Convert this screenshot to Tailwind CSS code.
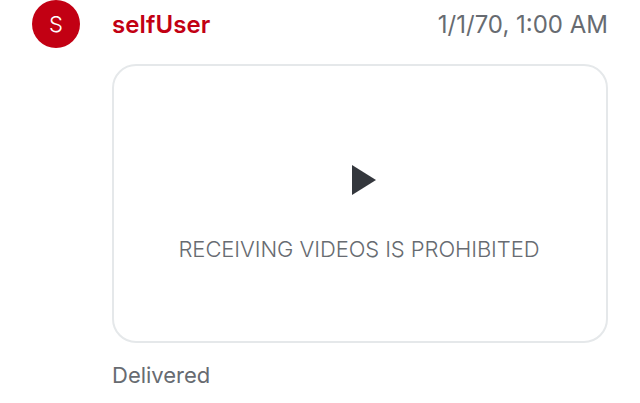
<!DOCTYPE html>
<html lang="en"><head><meta charset="utf-8"><title>Message</title>
<script src="https://cdn.jsdelivr.net/npm/@tailwindcss/browser@4"></script></head>
<body class="bg-white font-['Inter',sans-serif] w-[640px] h-[403px] overflow-hidden antialiased">
<article class="pl-8 pr-8 flex flex-col">
<header class="flex items-center h-12">
<div class="size-12 rounded-full bg-[#c20013] text-white text-[22px] font-light flex items-center justify-center">S</div>
<h1 class="ml-8 pt-0.5 text-[24px] leading-[30px] tracking-[0.12px] font-semibold text-[#c20013]">selfUser</h1>
<time class="ml-auto pt-0.5 text-[24px] leading-[30px] text-[#676b71]">1/1/70, 1:00 AM</time>
</header>
<section class="ml-20 mt-4 h-[279px] rounded-[24px] border-2 border-[#e5e8ea] flex flex-col items-center">
<svg class="mt-[99px] ml-2 w-6 h-[30px]" viewBox="0 0 24 30" fill="#34373d"><path d="M0 0 24 15 0 30Z"/></svg>
<p class="mt-10 mr-0.5 text-[22px] leading-[28px] tracking-[-0.08px] font-light text-[#676b71] whitespace-nowrap">RECEIVING VIDEOS IS PROHIBITED</p>
</section>
<footer class="ml-20 mt-[18px] text-[22px] leading-[28px] text-[#676b71]">Delivered</footer>
</article>
</body></html>
